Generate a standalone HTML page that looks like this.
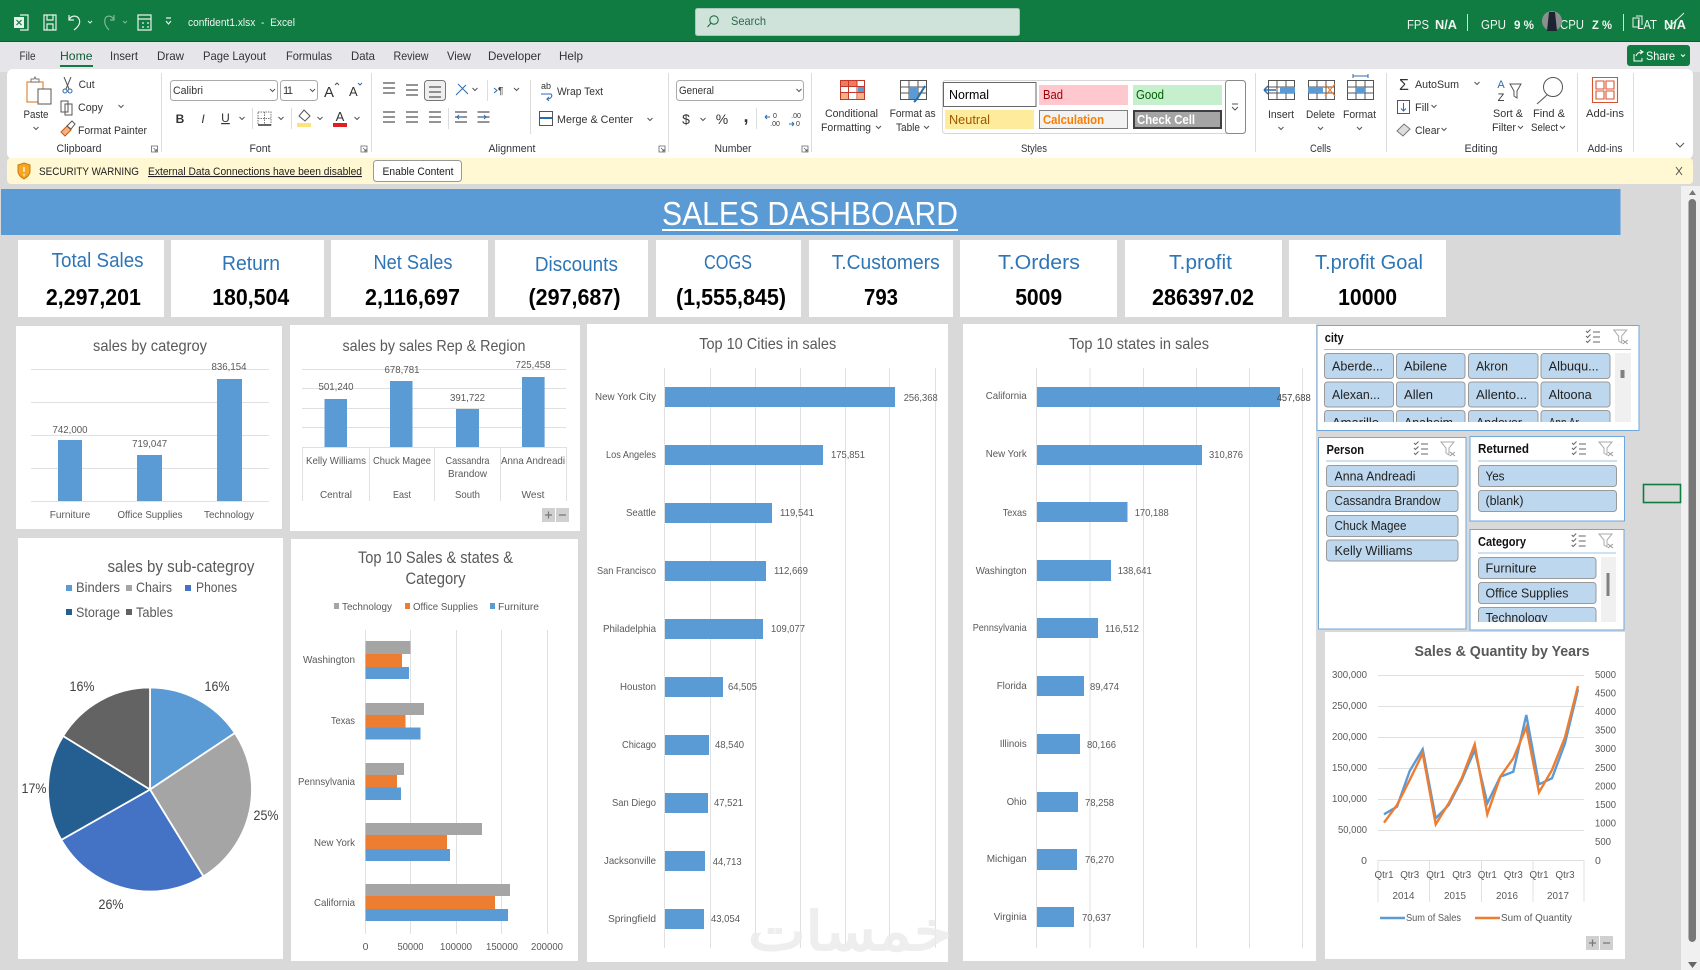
<!DOCTYPE html>
<html lang="en"><head><meta charset="utf-8"><title>confident1.xlsx - Excel</title>
<style>
html,body{margin:0;padding:0;background:#d9d9d9;width:1700px;height:970px;overflow:hidden}
svg{display:block;filter:blur(.35px)}
text{font-family:"Liberation Sans",sans-serif;fill:#595959;font-size:10.5px;white-space:pre}
.r text{fill:#333;font-size:11px}
.w text{fill:#eef5f0;font-size:11px}
.k{fill:#2e75b6!important;font-size:20px!important}
.v{fill:#000!important;font-size:23px!important;font-weight:bold}
.h{font-size:16px!important}
.b{fill:#5b9bd5}
.g{stroke:#e0e0e0;stroke-width:1;fill:none}
.sb{fill:#bdd7ee;stroke:#9a9a9a;stroke-width:1}
.sl{fill:#fff;stroke:#6fa8dc;stroke-width:1}
.st{fill:#222!important;font-size:12.5px!important}
.sh{fill:#111!important;font-size:12.5px!important;font-weight:bold}
.pm{fill:#d0d0d0}
</style></head><body>
<svg width="1700" height="970" viewBox="0 0 1700 970" xmlns="http://www.w3.org/2000/svg">
<defs>
<path id="ch" d="M0 0l2.5 2.5 2.5-2.5" fill="none" stroke="#555" stroke-width="1"/>
<g id="ms" fill="none" stroke="#666" stroke-width="1"><path d="M-7-6l1.5 1.5 3-3M-7-1l1.5 1.5 3-3M-7 4l1.5 1.5 3-3"/><path d="M0-5h7M0 0h7M0 5h7"/></g>
<g id="fc" fill="none" stroke="#aaa" stroke-width="1"><path d="M-7-7h13l-5 6v7l-3-2v-5z"/><path d="M2 3l5 4M7 3l-5 4" stroke="#999"/></g>
<g id="dl" fill="none" stroke="#666" stroke-width=".8"><path d="M-3-3h6v6h-6z"/><path d="M-1-1l3 3M2 0v2h-2"/></g>
<g id="al" stroke="#555" stroke-width="1.2"><path d="M-6-5h12M-6 0h12M-6 5h12"/></g>
<g id="grid" fill="none" stroke="#555" stroke-width="1"><path d="M.5.5h26v19h-26zM.5 7h26M.5 13h26M9 .5v19M18 .5v19"/></g>
<clipPath id="c1"><rect x="1320" y="352" width="295" height="70"/></clipPath>
<clipPath id="c2"><rect x="1474" y="555" width="125" height="67"/></clipPath>
</defs>

<rect width="1700" height="970" fill="#d9d9d9"/>

<!-- title bar -->
<rect width="1700" height="42" fill="#107c41"/>
<rect y="41" width="1700" height="1" fill="#0c5f32"/>
<g fill="none" stroke="#e8f2ec" stroke-width="1.2">
<path d="M20 15h8v15h-8"/>
<path d="M44 15h12v15h-12zM47 15v5h6v-5M47 30v-6h6v6"/>
<path d="M69 20c2-5 8-5 10-1 2 4-1 8-5 11M69 15v5h5"/>
<path d="M88 21l2 2 2-2" stroke-width="1"/>
<path d="M114 20c-2-5-8-5-9-1-1 4 1 8 4 11M114 15v5h-4" stroke="#7fb89a"/>
<path d="M123 21l2 2 2-2" stroke="#7fb89a" stroke-width="1"/>
<path d="M138 15h13v15h-13zM138 19h13M142 23h2M147 23h2M142 27h2M147 27h2"/>
<path d="M166 18h5M166 21l2.5 3 2.5-3"/>
</g>
<rect x="14" y="17" width="10" height="11" fill="#e8f2ec"/><path d="M16.500 20l5 5M21.500 20l-5 5" stroke="#107c41" stroke-width="1.200"/>
<g class="w">
<text x="188" y="26" textLength="107" lengthAdjust="spacingAndGlyphs">confident1.xlsx  -  Excel</text>
<text x="1407" y="29" style="font-size:13px" textLength="22" lengthAdjust="spacingAndGlyphs">FPS</text>
<text x="1435" y="29" style="font-size:13px;font-weight:bold" textLength="22" lengthAdjust="spacingAndGlyphs">N/A</text>
<text x="1481" y="29" style="font-size:13px" textLength="25" lengthAdjust="spacingAndGlyphs">GPU</text>
<text x="1514" y="29" style="font-size:12px;font-weight:bold" textLength="20" lengthAdjust="spacingAndGlyphs">9 %</text>
<text x="1560" y="29" style="font-size:13px" textLength="24" lengthAdjust="spacingAndGlyphs">CPU</text>
<text x="1592" y="29" style="font-size:12px;font-weight:bold" textLength="20" lengthAdjust="spacingAndGlyphs">Z %</text>
<text x="1637" y="29" style="font-size:13px" textLength="20" lengthAdjust="spacingAndGlyphs">LAT</text>
<text x="1664" y="29" style="font-size:13px;font-weight:bold" textLength="22" lengthAdjust="spacingAndGlyphs">N/A</text>
</g>
<rect x="1467" y="14" width="1" height="17" fill="#cfe3d8"/><rect x="1623" y="14" width="1" height="17" fill="#cfe3d8"/>
<circle cx="1552" cy="21" r="10" fill="#8b8f8f"/><path d="M1549 12h6l2 19h-10z" fill="#1d2430"/>
<path d="M1633 18h6v9h-6zM1636 16h6v9" fill="none" stroke="#e8f2ec"/>
<path d="M1666 30l18-17" stroke="#e8f2ec"/>
<rect x="695.500" y="8.500" width="324" height="27" rx="2" fill="#d0e3da" stroke="#a9c7b6"/>
<circle cx="714" cy="20" r="4.200" fill="none" stroke="#1f6d43" stroke-width="1.100"/><path d="M711 23l-3.500 4" stroke="#1f6d43" stroke-width="1.100"/>
<text x="731" y="25" style="fill:#2a6a48;font-size:12px" textLength="35" lengthAdjust="spacingAndGlyphs">Search</text>

<!-- tabs -->
<rect y="42" width="1700" height="30" fill="#e6e6ea"/>
<g class="r">
<text x="19.500" y="60" style="font-size:12px" textLength="16" lengthAdjust="spacingAndGlyphs">File</text>
<text x="60" y="60" style="font-size:12px;fill:#0e5c32" textLength="32.500" lengthAdjust="spacingAndGlyphs">Home</text>
<text x="110" y="60" style="font-size:12px" textLength="28" lengthAdjust="spacingAndGlyphs">Insert</text>
<text x="157" y="60" style="font-size:12px" textLength="27" lengthAdjust="spacingAndGlyphs">Draw</text>
<text x="203" y="60" style="font-size:12px" textLength="63" lengthAdjust="spacingAndGlyphs">Page Layout</text>
<text x="286" y="60" style="font-size:12px" textLength="46" lengthAdjust="spacingAndGlyphs">Formulas</text>
<text x="351" y="60" style="font-size:12px" textLength="24" lengthAdjust="spacingAndGlyphs">Data</text>
<text x="393.500" y="60" style="font-size:12px" textLength="35" lengthAdjust="spacingAndGlyphs">Review</text>
<text x="447" y="60" style="font-size:12px" textLength="24" lengthAdjust="spacingAndGlyphs">View</text>
<text x="488" y="60" style="font-size:12px" textLength="53" lengthAdjust="spacingAndGlyphs">Developer</text>
<text x="559" y="60" style="font-size:12px" textLength="24" lengthAdjust="spacingAndGlyphs">Help</text>
</g>
<rect x="60" y="65" width="33" height="2" fill="#107c41"/>
<rect x="1627" y="45" width="63" height="21" rx="3" fill="#107c41"/>
<path d="M1634 54v7h8v-3M1636 56c1-3 3-4 6-4M1640 50l3 2-3 2" fill="none" stroke="#fff"/>
<text x="1646" y="60" style="fill:#fff;font-size:12px" textLength="29" lengthAdjust="spacingAndGlyphs">Share</text>
<path d="M1681 54.500l2 2 2-2" fill="none" stroke="#fff"/>

<!-- ribbon -->
<rect x="7" y="69" width="1686" height="90" rx="6" fill="#fff"/>
<g fill="#dcdcdc">
<rect x="161" y="73" width="1" height="79"/><rect x="371" y="73" width="1" height="79"/><rect x="668" y="73" width="1" height="79"/><rect x="811" y="73" width="1" height="79"/><rect x="1255" y="73" width="1" height="79"/><rect x="1386" y="73" width="1" height="79"/><rect x="1577" y="73" width="1" height="79"/><rect x="1633" y="73" width="1" height="79"/>
<rect x="252" y="108" width="1" height="21"/><rect x="291" y="108" width="1" height="21"/><rect x="448" y="108" width="1" height="21"/><rect x="487" y="80" width="1" height="21"/><rect x="530" y="80" width="1" height="54"/><rect x="756" y="108" width="1" height="21"/>
</g>
<g class="r">
<!-- clipboard -->
<path d="M27 82h16v20h-16z" fill="#fff" stroke="#e08b3c" stroke-width="1.200"/><path d="M31 82v-3h3l1-2 1 2h3v3z" fill="#fff" stroke="#777"/>
<rect x="38" y="89" width="13" height="15" fill="#fff" stroke="#555"/>
<text x="36" y="118" text-anchor="middle" textLength="25" lengthAdjust="spacingAndGlyphs">Paste</text>
<use href="#ch" x="33.500" y="127"/>
<path d="M64 77l5 12M71 77l-5 12" stroke="#555" fill="none"/><circle cx="65" cy="91" r="2" fill="none" stroke="#2b6cb0"/><circle cx="70" cy="91" r="2" fill="none" stroke="#2b6cb0"/>
<text x="78.600" y="88" textLength="16" lengthAdjust="spacingAndGlyphs">Cut</text>
<path d="M61 101h7v11h-7zM65 104h7v11h-7z" fill="#fff" stroke="#555"/>
<text x="78" y="111" textLength="25" lengthAdjust="spacingAndGlyphs">Copy</text><use href="#ch" x="118.500" y="105"/>
<path d="M61 132l6-6 4 4-6 6z" fill="#f4b183" stroke="#c55a11"/><path d="M67 126l5-5 3 3-4 5z" fill="#fff" stroke="#555"/>
<text x="78" y="134" textLength="69" lengthAdjust="spacingAndGlyphs">Format Painter</text>
<text x="79" y="152" text-anchor="middle" textLength="45" lengthAdjust="spacingAndGlyphs">Clipboard</text>
<use href="#dl" x="154.500" y="149"/>
<!-- font -->
<rect x="170.500" y="80.500" width="107" height="20" rx="3" fill="#fff" stroke="#aaa"/><text x="173" y="94" textLength="30" lengthAdjust="spacingAndGlyphs">Calibri</text><use href="#ch" x="270" y="89"/>
<rect x="280.500" y="80.500" width="37" height="20" rx="3" fill="#fff" stroke="#aaa"/><text x="283" y="94" textLength="10">11</text><use href="#ch" x="310" y="89"/>
<text x="324" y="97" style="font-size:15px" textLength="10">A</text><path d="M335 85l2-2 2 2" fill="none" stroke="#555"/>
<text x="349" y="96" style="font-size:13px" textLength="9">A</text><path d="M358 83l2 2 2-2" fill="none" stroke="#2b6cb0"/>
<text x="180" y="123" text-anchor="middle" style="font-weight:bold;font-size:12px">B</text>
<text x="203" y="123" text-anchor="middle" style="font-style:italic;font-size:12px">I</text>
<text x="225.500" y="122" text-anchor="middle" style="font-size:12px;text-decoration:underline">U</text><use href="#ch" x="239.500" y="117"/>
<path d="M258 112h13v13h-13zM264.500 112v13M258 118.500h13" fill="none" stroke="#777" stroke-dasharray="1.500 1"/><path d="M258 125h13" stroke="#333" stroke-width="1.500"/><use href="#ch" x="278.500" y="117"/>
<path d="M304 110l6 6-5 5-6-5z" fill="#fff" stroke="#555"/><rect x="297" y="123" width="14" height="4" fill="#ffe27a"/><use href="#ch" x="317.500" y="117"/>
<text x="340" y="121" text-anchor="middle" style="font-size:13px">A</text><rect x="333" y="123" width="14" height="4" fill="#e02020"/><use href="#ch" x="354.500" y="117"/>
<text x="260" y="152" text-anchor="middle" textLength="21" lengthAdjust="spacingAndGlyphs">Font</text><use href="#dl" x="364" y="149"/>
<!-- alignment -->
<use href="#al" x="389" y="88"/><use href="#al" x="412" y="90"/>
<rect x="424.500" y="80.500" width="21" height="20" rx="3" fill="#eee" stroke="#777"/><use href="#al" x="435" y="92"/>
<path d="M456 95l10-10M458 84l10 10" stroke="#2b6cb0" fill="none"/><use href="#ch" x="472.500" y="88"/>
<path d="M494 88l3 2.500-3 2.500" stroke="#2b6cb0" fill="none"/><text x="498" y="94" style="font-size:10px">¶</text><use href="#ch" x="514" y="88"/>
<text x="541" y="89" style="font-size:9px">ab</text><path d="M541 94h10c2 2 0 5-4 5l2-2m-2 2l2 2" fill="none" stroke="#2b6cb0"/>
<text x="557" y="95" textLength="46" lengthAdjust="spacingAndGlyphs">Wrap Text</text>
<use href="#al" x="389" y="117"/><use href="#al" x="412" y="117"/><use href="#al" x="435" y="117"/><use href="#al" x="461" y="117"/><use href="#al" x="483.500" y="117"/>
<path d="M457 117h6m-6 0l2-2m-2 2l2 2M480 117h6m0 0l-2-2m2 2l-2 2" stroke="#2b6cb0" fill="none"/>
<rect x="539.500" y="111.500" width="13" height="14" fill="#fff" stroke="#555"/><path d="M540 118h12M542 118h8" stroke="#2b6cb0" stroke-width="2"/>
<text x="557" y="123" textLength="76" lengthAdjust="spacingAndGlyphs">Merge &amp; Center</text><use href="#ch" x="647.500" y="118"/>
<text x="512" y="152" text-anchor="middle" textLength="47" lengthAdjust="spacingAndGlyphs">Alignment</text><use href="#dl" x="662" y="149"/>
<!-- number -->
<rect x="676.500" y="80.500" width="127" height="20" rx="3" fill="#fff" stroke="#aaa"/><text x="679" y="94" textLength="35" lengthAdjust="spacingAndGlyphs">General</text><use href="#ch" x="796.500" y="89"/>
<text x="686" y="124" text-anchor="middle" style="font-size:14px">$</text><use href="#ch" x="700.500" y="118"/>
<text x="722" y="124" text-anchor="middle" style="font-size:14px">%</text>
<text x="746" y="122" text-anchor="middle" style="font-size:18px;font-weight:bold">,</text>
<text x="775" y="118" text-anchor="middle" style="font-size:7px">0</text><text x="775" y="126" text-anchor="middle" style="font-size:7px">.00</text><path d="M765 117h5m-5 0l2-2m-2 2l2 2" stroke="#2b6cb0" fill="none"/>
<text x="796" y="118" text-anchor="middle" style="font-size:7px">.00</text><text x="798" y="126" text-anchor="middle" style="font-size:7px">0</text><path d="M789 124h5m0 0l-2-2m2 2l-2 2" stroke="#2b6cb0" fill="none"/>
<text x="733" y="152" text-anchor="middle" textLength="37" lengthAdjust="spacingAndGlyphs">Number</text><use href="#dl" x="805" y="149"/>
<!-- styles -->
<rect x="840" y="80" width="25" height="19" fill="#fff"/><rect x="840" y="80" width="8" height="6" fill="#ef7b5c"/><rect x="849" y="80" width="8" height="6" fill="#ef7b5c"/><rect x="858" y="86" width="7" height="6" fill="#5b9bd5"/><rect x="840" y="93" width="8" height="6" fill="#f4b183"/><rect x="858" y="93" width="7" height="6" fill="#f4b183"/>
<path d="M840.500 80.500h24v19h-24zM840 86.500h25M840 92.500h25M848.500 80v19M857 80v19" fill="none" stroke="#c0392b"/>
<text x="851.500" y="117" text-anchor="middle" textLength="53" lengthAdjust="spacingAndGlyphs">Conditional</text>
<text x="821" y="131" textLength="50" lengthAdjust="spacingAndGlyphs">Formatting</text><use href="#ch" x="876" y="126"/>
<use href="#grid" x="900" y="80"/><rect x="909" y="87" width="9" height="12" fill="#5b9bd5"/><path d="M925 86l-8 13-3 3" stroke="#2b6cb0" stroke-width="2" fill="none"/>
<text x="889.600" y="117" textLength="46" lengthAdjust="spacingAndGlyphs">Format as</text>
<text x="896" y="131" textLength="24" lengthAdjust="spacingAndGlyphs">Table</text><use href="#ch" x="924" y="126"/>
<rect x="942.500" y="80.500" width="303" height="53" rx="3" fill="#fff" stroke="#d6d6d6"/>
<rect x="943.500" y="82.500" width="92.500" height="24" fill="#fff" stroke="#666"/><text x="949" y="99" style="fill:#000;font-size:12.500px" textLength="40" lengthAdjust="spacingAndGlyphs">Normal</text>
<rect x="1039" y="85" width="89" height="20" fill="#ffc7ce"/><text x="1043" y="99" style="fill:#9c0006;font-size:12.500px" textLength="20" lengthAdjust="spacingAndGlyphs">Bad</text>
<rect x="1133" y="85" width="89" height="20" fill="#c6efce"/><text x="1136" y="99" style="fill:#006100;font-size:12.500px" textLength="28" lengthAdjust="spacingAndGlyphs">Good</text>
<rect x="945" y="110" width="89" height="19" fill="#ffeb9c"/><text x="949" y="124" style="fill:#9c5700;font-size:12.500px" textLength="41" lengthAdjust="spacingAndGlyphs">Neutral</text>
<rect x="1039.500" y="110.500" width="88" height="18" fill="#f2f2f2" stroke="#7f7f7f"/><text x="1043" y="124" style="fill:#fa7d00;font-size:12.500px;font-weight:bold" textLength="61" lengthAdjust="spacingAndGlyphs">Calculation</text>
<rect x="1134" y="111" width="87" height="17" fill="#a5a5a5" stroke="#3f3f3f" stroke-width="2"/><text x="1137" y="124" style="fill:#fff;font-size:12.500px;font-weight:bold" textLength="58" lengthAdjust="spacingAndGlyphs">Check Cell</text>
<rect x="1225.500" y="80.500" width="20" height="53" rx="3" fill="#fff" stroke="#888"/><path d="M1232 104h6M1232 107l3 3 3-3" fill="none" stroke="#555"/>
<text x="1034" y="152" text-anchor="middle" textLength="26" lengthAdjust="spacingAndGlyphs">Styles</text>
<!-- cells -->
<use href="#grid" x="1268" y="80"/><rect x="1280" y="87" width="15" height="6" fill="#5b9bd5"/><path d="M1264 90h12m-12 0l4-4m-4 4l4 4" stroke="#2b6cb0" stroke-width="1.500" fill="none"/>
<text x="1281" y="118" text-anchor="middle" textLength="26" lengthAdjust="spacingAndGlyphs">Insert</text><use href="#ch" x="1278.500" y="127"/>
<use href="#grid" x="1308" y="80"/><rect x="1308" y="87" width="15" height="6" fill="#5b9bd5"/><path d="M1325 84l10 12M1335 84l-10 12" stroke="#ed7d31" stroke-width="1.200" fill="none"/>
<text x="1320.500" y="118" text-anchor="middle" textLength="29" lengthAdjust="spacingAndGlyphs">Delete</text><use href="#ch" x="1318" y="127"/>
<path d="M1353 76h15M1353 74v4M1368 74v4" stroke="#2b6cb0" fill="none"/>
<use href="#grid" x="1347" y="80"/><rect x="1356" y="87" width="9" height="6" fill="#5b9bd5"/>
<text x="1359.500" y="118" text-anchor="middle" textLength="33" lengthAdjust="spacingAndGlyphs">Format</text><use href="#ch" x="1357" y="127"/>
<text x="1320.500" y="152" text-anchor="middle" textLength="21" lengthAdjust="spacingAndGlyphs">Cells</text>
<!-- editing -->
<text x="1404" y="90" text-anchor="middle" style="font-size:16px">Σ</text><text x="1415" y="88" textLength="44" lengthAdjust="spacingAndGlyphs">AutoSum</text><use href="#ch" x="1474.500" y="82"/>
<rect x="1397.500" y="100.500" width="12" height="13" fill="#fff" stroke="#555"/><path d="M1403.500 103v8m-2.500-2.500l2.500 2.500 2.500-2.500" stroke="#2b6cb0" fill="none"/>
<text x="1415" y="111" textLength="14" lengthAdjust="spacingAndGlyphs">Fill</text><use href="#ch" x="1431.500" y="105"/>
<path d="M1397 131l7-7 6 5-7 7z" fill="#ddd" stroke="#777"/>
<text x="1415" y="134" textLength="25" lengthAdjust="spacingAndGlyphs">Clear</text><use href="#ch" x="1441.500" y="128"/>
<text x="1501" y="88" text-anchor="middle" style="font-size:11px;fill:#2b6cb0">A</text><text x="1501" y="101" text-anchor="middle" style="font-size:11px">Z</text><path d="M1510 84h11l-4 7v7l-3-2v-5z" fill="none" stroke="#555"/>
<circle cx="1553" cy="87" r="9.500" fill="none" stroke="#555"/><path d="M1547 95l-10 9" stroke="#555"/>
<text x="1508" y="117" text-anchor="middle" textLength="30" lengthAdjust="spacingAndGlyphs">Sort &amp;</text>
<text x="1492" y="131" textLength="24" lengthAdjust="spacingAndGlyphs">Filter</text><use href="#ch" x="1518" y="126"/>
<text x="1549" y="117" text-anchor="middle" textLength="32" lengthAdjust="spacingAndGlyphs">Find &amp;</text>
<text x="1531" y="131" textLength="27" lengthAdjust="spacingAndGlyphs">Select</text><use href="#ch" x="1560" y="126"/>
<text x="1481" y="152" text-anchor="middle" textLength="33" lengthAdjust="spacingAndGlyphs">Editing</text>
<!-- add-ins -->
<path d="M1592.500 77.500h25v25h-25zM1596 81h8v8h-8zM1606 81h8v8h-8zM1596 91h8v8h-8zM1606 91h8v8h-8z" fill="#fff" stroke="#d9532c" stroke-width="1.100"/>
<text x="1605" y="117" text-anchor="middle" textLength="38" lengthAdjust="spacingAndGlyphs">Add-ins</text>
<text x="1605" y="152" text-anchor="middle" textLength="35" lengthAdjust="spacingAndGlyphs">Add-ins</text>
<path d="M1676 143l4 4 4-4" fill="none" stroke="#555"/>
</g>

<!-- security -->
<rect x="7" y="158" width="1686" height="26" rx="4" fill="#fff8d2"/>
<path d="M24 163l6 2v6c0 4-3 6-6 8-3-2-6-4-6-8v-6z" fill="#f5a623" stroke="#c97a10"/><path d="M24 167v5M24 174v1.500" stroke="#fff" stroke-width="1.300"/>
<text x="39" y="175" style="fill:#222;font-size:11px" textLength="100" lengthAdjust="spacingAndGlyphs">SECURITY WARNING</text>
<text x="148" y="175" style="fill:#222;font-size:11px;text-decoration:underline" textLength="214" lengthAdjust="spacingAndGlyphs">External Data Connections have been disabled</text>
<rect x="373.500" y="160.500" width="88" height="21" rx="3" fill="#fff" stroke="#999"/>
<text x="418" y="175" text-anchor="middle" style="fill:#222;font-size:11px" textLength="71" lengthAdjust="spacingAndGlyphs">Enable Content</text>
<path d="M1676 167l6 8M1682 167l-6 8" stroke="#555" fill="none"/>

<!-- scrollbar -->
<rect x="1681" y="186" width="19" height="784" fill="#f0f0f0"/>
<rect x="1688.500" y="199" width="7.500" height="743" rx="3.700" fill="#777"/>
<path d="M1689 195l3.500-5 3.500 5z" fill="#777"/><path d="M1688 962l4.500 6 4.500-6z" fill="#666"/>
<rect x="1643.500" y="484.500" width="37" height="18" fill="none" stroke="#107c41" stroke-width="1.600"/>

<!-- banner -->
<rect x="1" y="189" width="1619.500" height="46" fill="#5b9bd5"/>
<text x="810" y="225" text-anchor="middle" style="fill:#fff;font-size:33px" textLength="296" lengthAdjust="spacingAndGlyphs">SALES DASHBOARD</text>
<rect x="662" y="229" width="296" height="2" fill="#fff"/>

<!-- KPI -->
<g fill="#fff">
<rect x="18" y="240" width="146" height="77"/><rect x="171" y="240" width="153" height="77"/><rect x="331" y="240" width="157" height="77"/><rect x="495" y="240" width="153" height="77"/><rect x="656" y="240" width="145" height="77"/><rect x="809" y="240" width="144" height="77"/><rect x="960" y="240" width="157" height="77"/><rect x="1125" y="240" width="157" height="77"/><rect x="1289" y="240" width="157" height="77"/>
</g>
<text class="k" x="97.600" y="267" text-anchor="middle" textLength="92" lengthAdjust="spacingAndGlyphs">Total Sales</text>
<text class="v" x="93.400" y="305" text-anchor="middle" textLength="95" lengthAdjust="spacingAndGlyphs">2,297,201</text>
<text class="k" x="251" y="270" text-anchor="middle" textLength="58" lengthAdjust="spacingAndGlyphs">Return</text>
<text class="v" x="250.700" y="305" text-anchor="middle" textLength="77" lengthAdjust="spacingAndGlyphs">180,504</text>
<text class="k" x="413" y="269" text-anchor="middle" textLength="79" lengthAdjust="spacingAndGlyphs">Net Sales</text>
<text class="v" x="412.500" y="305" text-anchor="middle" textLength="95" lengthAdjust="spacingAndGlyphs">2,116,697</text>
<text class="k" x="576.400" y="271" text-anchor="middle" textLength="83" lengthAdjust="spacingAndGlyphs">Discounts</text>
<text class="v" x="574.500" y="305" text-anchor="middle" textLength="92" lengthAdjust="spacingAndGlyphs">(297,687)</text>
<text class="k" x="728" y="269" text-anchor="middle" textLength="48" lengthAdjust="spacingAndGlyphs">COGS</text>
<text class="v" x="731" y="305" text-anchor="middle" textLength="110" lengthAdjust="spacingAndGlyphs">(1,555,845)</text>
<text class="k" x="885.700" y="269" text-anchor="middle" textLength="108" lengthAdjust="spacingAndGlyphs">T.Customers</text>
<text class="v" x="881" y="305" text-anchor="middle" textLength="34" lengthAdjust="spacingAndGlyphs">793</text>
<text class="k" x="1039" y="269" text-anchor="middle" textLength="82" lengthAdjust="spacingAndGlyphs">T.Orders</text>
<text class="v" x="1038.700" y="305" text-anchor="middle" textLength="47" lengthAdjust="spacingAndGlyphs">5009</text>
<text class="k" x="1200.500" y="269" text-anchor="middle" textLength="63" lengthAdjust="spacingAndGlyphs">T.profit</text>
<text class="v" x="1203" y="305" text-anchor="middle" textLength="102" lengthAdjust="spacingAndGlyphs">286397.02</text>
<text class="k" x="1369" y="269" text-anchor="middle" textLength="108" lengthAdjust="spacingAndGlyphs">T.profit Goal</text>
<text class="v" x="1367.600" y="305" text-anchor="middle" textLength="59" lengthAdjust="spacingAndGlyphs">10000</text>

<!-- chart cards -->
<g fill="#fff">
<rect x="16" y="326" width="266" height="203"/><rect x="290" y="325" width="290" height="206"/><rect x="587" y="324" width="361" height="638"/><rect x="963" y="324" width="353" height="637"/><rect x="18" y="538" width="265" height="421"/><rect x="291" y="539" width="287" height="422"/><rect x="1325" y="632" width="300" height="327"/>
</g>

<!-- sales by category -->
<text class="h" x="150" y="351" text-anchor="middle" textLength="114" lengthAdjust="spacingAndGlyphs">sales by categroy</text>
<path class="g" d="M31 369.500h238M31 402.500h238M31 435.500h238M31 468.500h238M31 501.500h238"/>
<rect class="b" x="58" y="440" width="24" height="61"/><rect class="b" x="137" y="455" width="25" height="46"/><rect class="b" x="217" y="379" width="25" height="122"/>
<text x="70" y="433" text-anchor="middle" textLength="35" lengthAdjust="spacingAndGlyphs">742,000</text>
<text x="149.600" y="447" text-anchor="middle" textLength="35" lengthAdjust="spacingAndGlyphs">719,047</text>
<text x="229" y="370" text-anchor="middle" textLength="35" lengthAdjust="spacingAndGlyphs">836,154</text>
<text x="70" y="518" text-anchor="middle" textLength="40.500" lengthAdjust="spacingAndGlyphs">Furniture</text>
<text x="150" y="518" text-anchor="middle" textLength="65" lengthAdjust="spacingAndGlyphs">Office Supplies</text>
<text x="229" y="518" text-anchor="middle" textLength="50" lengthAdjust="spacingAndGlyphs">Technology</text>

<!-- rep & region -->
<text class="h" x="434" y="351" text-anchor="middle" textLength="183" lengthAdjust="spacingAndGlyphs">sales by sales Rep &amp; Region</text>
<path class="g" d="M302 369.500h264M302 388.500h264M302 408.500h264M302 427.500h264M302 447.500h264M302.500 447v54M369.500 447v54M434.500 447v54M500.500 447v54M566.500 447v54"/>
<rect class="b" x="324.500" y="399" width="22.500" height="48"/><rect class="b" x="390" y="381" width="22.500" height="66"/><rect class="b" x="456" y="409" width="23" height="38"/><rect class="b" x="522" y="377" width="22.600" height="70"/>
<text x="336" y="390" text-anchor="middle" textLength="35" lengthAdjust="spacingAndGlyphs">501,240</text>
<text x="402" y="373" text-anchor="middle" textLength="35" lengthAdjust="spacingAndGlyphs">678,781</text>
<text x="467.500" y="401" text-anchor="middle" textLength="35" lengthAdjust="spacingAndGlyphs">391,722</text>
<text x="533" y="368" text-anchor="middle" textLength="35" lengthAdjust="spacingAndGlyphs">725,458</text>
<text x="336" y="464" text-anchor="middle" textLength="60" lengthAdjust="spacingAndGlyphs">Kelly Williams</text>
<text x="402" y="464" text-anchor="middle" textLength="58" lengthAdjust="spacingAndGlyphs">Chuck Magee</text>
<text x="467.500" y="464" text-anchor="middle" textLength="44" lengthAdjust="spacingAndGlyphs">Cassandra</text>
<text x="467.500" y="477" text-anchor="middle" textLength="39" lengthAdjust="spacingAndGlyphs">Brandow</text>
<text x="533" y="464" text-anchor="middle" textLength="64" lengthAdjust="spacingAndGlyphs">Anna Andreadi</text>
<text x="336" y="498" text-anchor="middle" textLength="32" lengthAdjust="spacingAndGlyphs">Central</text>
<text x="402" y="498" text-anchor="middle" textLength="18" lengthAdjust="spacingAndGlyphs">East</text>
<text x="467.500" y="498" text-anchor="middle" textLength="25" lengthAdjust="spacingAndGlyphs">South</text>
<text x="533" y="498" text-anchor="middle" textLength="23" lengthAdjust="spacingAndGlyphs">West</text>
<rect class="pm" x="542" y="508" width="13" height="14"/><rect class="pm" x="556" y="508" width="13" height="14"/>
<path d="M545 515h7M548.500 511.500v7M559 515h7" stroke="#777" stroke-width="1.200" fill="none"/>

<!-- pie -->
<text x="181" y="572" text-anchor="middle" style="font-size:17px" textLength="147" lengthAdjust="spacingAndGlyphs">sales by sub-categroy</text>
<rect x="66" y="585" width="6" height="6" fill="#5b9bd5"/><text x="76" y="592" style="font-size:14px" textLength="44" lengthAdjust="spacingAndGlyphs">Binders</text>
<rect x="126" y="585" width="6" height="6" fill="#a5a5a5"/><text x="136" y="592" style="font-size:14px" textLength="36" lengthAdjust="spacingAndGlyphs">Chairs</text>
<rect x="185" y="585" width="6" height="6" fill="#4472c4"/><text x="196" y="592" style="font-size:14px" textLength="41" lengthAdjust="spacingAndGlyphs">Phones</text>
<rect x="66" y="609" width="6" height="6" fill="#255e91"/><text x="76" y="617" style="font-size:14px" textLength="44" lengthAdjust="spacingAndGlyphs">Storage</text>
<rect x="126" y="609" width="6" height="6" fill="#636363"/><text x="136" y="617" style="font-size:14px" textLength="37" lengthAdjust="spacingAndGlyphs">Tables</text>
<g stroke="#fff" stroke-width="1.800">
<path d="M150 789.500L150 687.500A102 102 0 0 1 234.900 733Z" fill="#5b9bd5"/>
<path d="M150 789.500L234.900 733A102 102 0 0 1 203.400 876.400Z" fill="#a5a5a5"/>
<path d="M150 789.500L203.400 876.400A102 102 0 0 1 61.300 839.900Z" fill="#4472c4"/>
<path d="M150 789.500L61.300 839.900A102 102 0 0 1 63.100 736Z" fill="#255e91"/>
<path d="M150 789.500L63.100 736A102 102 0 0 1 150 687.500Z" fill="#636363"/>
</g>
<text x="217" y="691" text-anchor="middle" style="font-size:14px;fill:#404040" textLength="25" lengthAdjust="spacingAndGlyphs">16%</text>
<text x="266" y="820" text-anchor="middle" style="font-size:14px;fill:#404040" textLength="25" lengthAdjust="spacingAndGlyphs">25%</text>
<text x="111" y="909" text-anchor="middle" style="font-size:14px;fill:#404040" textLength="25" lengthAdjust="spacingAndGlyphs">26%</text>
<text x="34" y="793" text-anchor="middle" style="font-size:14px;fill:#404040" textLength="25" lengthAdjust="spacingAndGlyphs">17%</text>
<text x="82" y="691" text-anchor="middle" style="font-size:14px;fill:#404040" textLength="25" lengthAdjust="spacingAndGlyphs">16%</text>

<!-- Top 10 sales & states -->
<text x="435.500" y="563" text-anchor="middle" style="font-size:17px" textLength="155" lengthAdjust="spacingAndGlyphs">Top 10 Sales &amp; states &amp;</text>
<text x="435.500" y="584" text-anchor="middle" style="font-size:17px" textLength="60" lengthAdjust="spacingAndGlyphs">Category</text>
<rect x="334" y="603" width="5" height="6" fill="#a5a5a5"/><text x="342" y="610" textLength="50" lengthAdjust="spacingAndGlyphs">Technology</text>
<rect x="405" y="603" width="5" height="6" fill="#ed7d31"/><text x="413" y="610" textLength="65" lengthAdjust="spacingAndGlyphs">Office Supplies</text>
<rect x="490" y="603" width="5" height="6" fill="#5b9bd5"/><text x="498" y="610" textLength="41" lengthAdjust="spacingAndGlyphs">Furniture</text>
<path class="g" d="M365.500 630v304M410.500 630v304M456.500 630v304M501.500 630v304M547.500 630v304"/>
<g fill="#a5a5a5"><rect x="365.500" y="641" width="45" height="13"/><rect x="365.500" y="703" width="58.500" height="12"/><rect x="365.500" y="763" width="38.500" height="12"/><rect x="365.500" y="823" width="116.500" height="12"/><rect x="365.500" y="884" width="144.500" height="12"/></g>
<g fill="#ed7d31"><rect x="365.500" y="654" width="36.500" height="13"/><rect x="365.500" y="715" width="40" height="12.500"/><rect x="365.500" y="775" width="31.500" height="12.500"/><rect x="365.500" y="835" width="81.500" height="14"/><rect x="365.500" y="896" width="129.500" height="13"/></g>
<g fill="#5b9bd5"><rect x="365.500" y="667" width="43.500" height="12"/><rect x="365.500" y="727.500" width="55" height="12"/><rect x="365.500" y="787.500" width="35.500" height="12.500"/><rect x="365.500" y="849" width="84.500" height="12"/><rect x="365.500" y="909" width="142.500" height="12"/></g>
<text x="355" y="663" text-anchor="end" textLength="52" lengthAdjust="spacingAndGlyphs">Washington</text>
<text x="355" y="724" text-anchor="end" textLength="24" lengthAdjust="spacingAndGlyphs">Texas</text>
<text x="355" y="785" text-anchor="end" textLength="57" lengthAdjust="spacingAndGlyphs">Pennsylvania</text>
<text x="355" y="846" text-anchor="end" textLength="41" lengthAdjust="spacingAndGlyphs">New York</text>
<text x="355" y="906" text-anchor="end" textLength="41" lengthAdjust="spacingAndGlyphs">California</text>
<text x="365.500" y="950" text-anchor="middle">0</text>
<text x="410.500" y="950" text-anchor="middle" textLength="26" lengthAdjust="spacingAndGlyphs">50000</text>
<text x="456" y="950" text-anchor="middle" textLength="32" lengthAdjust="spacingAndGlyphs">100000</text>
<text x="502" y="950" text-anchor="middle" textLength="32" lengthAdjust="spacingAndGlyphs">150000</text>
<text x="547" y="950" text-anchor="middle" textLength="32" lengthAdjust="spacingAndGlyphs">200000</text>

<!-- Top 10 cities -->
<text class="h" x="767.700" y="349" text-anchor="middle" textLength="137" lengthAdjust="spacingAndGlyphs">Top 10 Cities in sales</text>
<path class="g" d="M664.500 368v580M710.500 368v580M755.500 368v580M800.500 368v580M845.500 368v580M889.500 368v580M935.500 368v580"/>
<g class="b">
<rect x="665" y="387" width="230" height="20"/><rect x="665" y="445" width="158" height="20"/><rect x="665" y="503" width="107" height="20"/><rect x="665" y="561" width="101" height="20"/><rect x="665" y="619" width="98" height="20"/><rect x="665" y="677" width="58" height="20"/><rect x="665" y="735" width="44" height="20"/><rect x="665" y="793" width="43" height="20"/><rect x="665" y="851" width="40" height="20"/><rect x="665" y="909" width="39" height="20"/>
</g>
<text x="656" y="400" text-anchor="end" textLength="61" lengthAdjust="spacingAndGlyphs">New York City</text>
<text x="656" y="458" text-anchor="end" textLength="50" lengthAdjust="spacingAndGlyphs">Los Angeles</text>
<text x="656" y="516" text-anchor="end" textLength="30" lengthAdjust="spacingAndGlyphs">Seattle</text>
<text x="656" y="574" text-anchor="end" textLength="59" lengthAdjust="spacingAndGlyphs">San Francisco</text>
<text x="656" y="632" text-anchor="end" textLength="53" lengthAdjust="spacingAndGlyphs">Philadelphia</text>
<text x="656" y="690" text-anchor="end" textLength="36" lengthAdjust="spacingAndGlyphs">Houston</text>
<text x="656" y="748" text-anchor="end" textLength="34" lengthAdjust="spacingAndGlyphs">Chicago</text>
<text x="656" y="806" text-anchor="end" textLength="44" lengthAdjust="spacingAndGlyphs">San Diego</text>
<text x="656" y="864" text-anchor="end" textLength="52" lengthAdjust="spacingAndGlyphs">Jacksonville</text>
<text x="656" y="922" text-anchor="end" textLength="48" lengthAdjust="spacingAndGlyphs">Springfield</text>
<text x="903.700" y="401" textLength="34" lengthAdjust="spacingAndGlyphs">256,368</text>
<text x="831" y="458" textLength="34" lengthAdjust="spacingAndGlyphs">175,851</text>
<text x="780" y="516" textLength="34" lengthAdjust="spacingAndGlyphs">119,541</text>
<text x="774" y="574" textLength="34" lengthAdjust="spacingAndGlyphs">112,669</text>
<text x="771" y="632" textLength="34" lengthAdjust="spacingAndGlyphs">109,077</text>
<text x="728" y="690" textLength="29" lengthAdjust="spacingAndGlyphs">64,505</text>
<text x="715" y="748" textLength="29" lengthAdjust="spacingAndGlyphs">48,540</text>
<text x="714" y="806" textLength="29" lengthAdjust="spacingAndGlyphs">47,521</text>
<text x="712.700" y="865" textLength="29" lengthAdjust="spacingAndGlyphs">44,713</text>
<text x="711" y="922" textLength="29" lengthAdjust="spacingAndGlyphs">43,054</text>

<!-- Top 10 states -->
<text class="h" x="1139" y="349" text-anchor="middle" textLength="140" lengthAdjust="spacingAndGlyphs">Top 10 states in sales</text>
<path class="g" d="M1036.500 368v580M1090 368v580M1143.500 368v580M1196.500 368v580M1249.500 368v580M1302.500 368v580"/>
<g class="b">
<rect x="1037" y="387" width="243" height="20"/><rect x="1037" y="445" width="165" height="20"/><rect x="1037" y="502" width="90.500" height="20"/><rect x="1037" y="560" width="74" height="21"/><rect x="1037" y="618" width="61" height="20"/><rect x="1037" y="676" width="47" height="20"/><rect x="1037" y="734" width="43" height="20"/><rect x="1037" y="792" width="41" height="20"/><rect x="1037" y="849" width="40" height="21"/><rect x="1037" y="907" width="37" height="20"/>
</g>
<text x="1026.700" y="399" text-anchor="end" textLength="41" lengthAdjust="spacingAndGlyphs">California</text>
<text x="1026.700" y="457" text-anchor="end" textLength="41" lengthAdjust="spacingAndGlyphs">New York</text>
<text x="1026.700" y="516" text-anchor="end" textLength="24" lengthAdjust="spacingAndGlyphs">Texas</text>
<text x="1026.700" y="574" text-anchor="end" textLength="51" lengthAdjust="spacingAndGlyphs">Washington</text>
<text x="1026.700" y="631" text-anchor="end" textLength="54" lengthAdjust="spacingAndGlyphs">Pennsylvania</text>
<text x="1026.700" y="689" text-anchor="end" textLength="30" lengthAdjust="spacingAndGlyphs">Florida</text>
<text x="1026.700" y="747" text-anchor="end" textLength="27" lengthAdjust="spacingAndGlyphs">Illinois</text>
<text x="1026.700" y="805" text-anchor="end" textLength="20" lengthAdjust="spacingAndGlyphs">Ohio</text>
<text x="1026.700" y="862" text-anchor="end" textLength="40" lengthAdjust="spacingAndGlyphs">Michigan</text>
<text x="1026.700" y="920" text-anchor="end" textLength="33" lengthAdjust="spacingAndGlyphs">Virginia</text>
<text x="1276.700" y="401" style="fill:#404040" textLength="34" lengthAdjust="spacingAndGlyphs">457,688</text>
<text x="1209" y="458" textLength="34" lengthAdjust="spacingAndGlyphs">310,876</text>
<text x="1134.700" y="516" textLength="34" lengthAdjust="spacingAndGlyphs">170,188</text>
<text x="1117.700" y="574" textLength="34" lengthAdjust="spacingAndGlyphs">138,641</text>
<text x="1105" y="632" textLength="34" lengthAdjust="spacingAndGlyphs">116,512</text>
<text x="1090" y="690" textLength="29" lengthAdjust="spacingAndGlyphs">89,474</text>
<text x="1087" y="748" textLength="29" lengthAdjust="spacingAndGlyphs">80,166</text>
<text x="1085" y="806" textLength="29" lengthAdjust="spacingAndGlyphs">78,258</text>
<text x="1085" y="863" textLength="29" lengthAdjust="spacingAndGlyphs">76,270</text>
<text x="1082" y="921" textLength="29" lengthAdjust="spacingAndGlyphs">70,637</text>

<!-- watermark -->
<text x="850" y="950" text-anchor="middle" direction="rtl" style="font-family:'DejaVu Sans',sans-serif;font-size:54px;fill:#ececec;stroke:#ececec;stroke-width:2;opacity:.85" textLength="204" lengthAdjust="spacingAndGlyphs">خمسات</text>

<!-- slicers -->
<rect class="sl" x="1317" y="325.500" width="322" height="105"/>
<text class="sh" x="1324.700" y="342" textLength="19" lengthAdjust="spacingAndGlyphs">city</text>
<use href="#ms" x="1593" y="337"/><use href="#fc" x="1620.700" y="337"/>
<rect x="1324" y="349" width="307" height="1" fill="#9dc3e6"/>
<rect x="1615" y="353" width="16" height="69" fill="#f0f0f0"/><rect x="1620.500" y="370" width="4" height="8" fill="#808080"/>
<g clip-path="url(#c1)">
<rect class="sb" x="1324.500" y="353.500" width="69" height="25" rx="3"/><rect class="sb" x="1396.500" y="353.500" width="68.500" height="25" rx="3"/><rect class="sb" x="1468.500" y="353.500" width="69.500" height="25" rx="3"/><rect class="sb" x="1541" y="353.500" width="69" height="25" rx="3"/>
<rect class="sb" x="1324.500" y="382" width="69" height="25" rx="3"/><rect class="sb" x="1396.500" y="382" width="68.500" height="25" rx="3"/><rect class="sb" x="1468.500" y="382" width="69.500" height="25" rx="3"/><rect class="sb" x="1541" y="382" width="69" height="25" rx="3"/>
<rect class="sb" x="1324.500" y="410.500" width="69" height="25" rx="3"/><rect class="sb" x="1396.500" y="410.500" width="68.500" height="25" rx="3"/><rect class="sb" x="1468.500" y="410.500" width="69.500" height="25" rx="3"/><rect class="sb" x="1541" y="410.500" width="69" height="25" rx="3"/>
<text class="st" x="1332" y="370.500" textLength="51" lengthAdjust="spacingAndGlyphs">Aberde...</text>
<text class="st" x="1404" y="370.500" textLength="43" lengthAdjust="spacingAndGlyphs">Abilene</text>
<text class="st" x="1476" y="370.500" textLength="32" lengthAdjust="spacingAndGlyphs">Akron</text>
<text class="st" x="1548.700" y="370.500" textLength="50" lengthAdjust="spacingAndGlyphs">Albuqu...</text>
<text class="st" x="1332" y="399" textLength="48" lengthAdjust="spacingAndGlyphs">Alexan...</text>
<text class="st" x="1404" y="399" textLength="29" lengthAdjust="spacingAndGlyphs">Allen</text>
<text class="st" x="1476" y="399" textLength="51" lengthAdjust="spacingAndGlyphs">Allento...</text>
<text class="st" x="1548.700" y="399" textLength="43" lengthAdjust="spacingAndGlyphs">Altoona</text>
<text class="st" x="1332" y="427" textLength="47" lengthAdjust="spacingAndGlyphs">Amarillo</text>
<text class="st" x="1404" y="427" textLength="49" lengthAdjust="spacingAndGlyphs">Anaheim</text>
<text class="st" x="1476" y="427" textLength="46" lengthAdjust="spacingAndGlyphs">Andover</text>
<text class="st" x="1548.700" y="427" textLength="38" lengthAdjust="spacingAndGlyphs">Ann Ar...</text>
</g>

<rect class="sl" x="1318.500" y="437.500" width="147.500" height="191.500"/>
<text class="sh" x="1326.500" y="454" textLength="37.500" lengthAdjust="spacingAndGlyphs">Person</text>
<use href="#ms" x="1421" y="449"/><use href="#fc" x="1448" y="449"/>
<rect x="1326" y="460.500" width="132" height="1" fill="#9dc3e6"/>
<rect class="sb" x="1326.500" y="465.500" width="131.500" height="21" rx="3"/><rect class="sb" x="1326.500" y="490.500" width="131.500" height="21" rx="3"/><rect class="sb" x="1326.500" y="515.500" width="131.500" height="21" rx="3"/><rect class="sb" x="1326.500" y="540" width="131.500" height="21" rx="3"/>
<text class="st" x="1334.500" y="480.500" textLength="81" lengthAdjust="spacingAndGlyphs">Anna Andreadi</text>
<text class="st" x="1334.500" y="505" textLength="106" lengthAdjust="spacingAndGlyphs">Cassandra Brandow</text>
<text class="st" x="1334.500" y="530" textLength="72" lengthAdjust="spacingAndGlyphs">Chuck Magee</text>
<text class="st" x="1334.500" y="555" textLength="78" lengthAdjust="spacingAndGlyphs">Kelly Williams</text>

<rect class="sl" x="1470" y="436.500" width="154.500" height="84.500"/>
<text class="sh" x="1478" y="453" textLength="51" lengthAdjust="spacingAndGlyphs">Returned</text>
<use href="#ms" x="1579" y="449"/><use href="#fc" x="1606" y="449"/>
<rect x="1478" y="460.500" width="139" height="1" fill="#9dc3e6"/>
<rect class="sb" x="1478.500" y="465.500" width="138" height="21" rx="3"/><rect class="sb" x="1478.500" y="490.500" width="138" height="21" rx="3"/>
<text class="st" x="1485.500" y="480.500" textLength="19" lengthAdjust="spacingAndGlyphs">Yes</text>
<text class="st" x="1485.500" y="505" textLength="38" lengthAdjust="spacingAndGlyphs">(blank)</text>

<rect class="sl" x="1470" y="529.500" width="154" height="100.500"/>
<text class="sh" x="1478" y="546" textLength="48" lengthAdjust="spacingAndGlyphs">Category</text>
<use href="#ms" x="1578.700" y="541"/><use href="#fc" x="1606" y="541"/>
<rect x="1478" y="552.500" width="138" height="1" fill="#9dc3e6"/>
<rect x="1601" y="557" width="15" height="65" fill="#f0f0f0"/><rect x="1606.500" y="573" width="3" height="23" fill="#808080"/>
<g clip-path="url(#c2)">
<rect class="sb" x="1478.500" y="557.500" width="117.500" height="21" rx="3"/><rect class="sb" x="1478.500" y="582.500" width="117.500" height="21" rx="3"/><rect class="sb" x="1478.500" y="607.500" width="117.500" height="21" rx="3"/>
<text class="st" x="1485.500" y="572.500" textLength="51" lengthAdjust="spacingAndGlyphs">Furniture</text>
<text class="st" x="1485.500" y="597.500" textLength="83" lengthAdjust="spacingAndGlyphs">Office Supplies</text>
<text class="st" x="1485.500" y="622" textLength="62" lengthAdjust="spacingAndGlyphs">Technology</text>
</g>

<!-- line chart -->
<text x="1502" y="656" text-anchor="middle" style="font-size:15px;font-weight:bold" textLength="175" lengthAdjust="spacingAndGlyphs">Sales &amp; Quantity by Years</text>
<path class="g" d="M1378 675.500h206M1378 706.500h206M1378 737.500h206M1378 768.500h206M1378 799.500h206M1378 830.500h206M1378 860.500h206M1378 860v42M1429.500 860v42M1481.500 860v42M1533 860v42M1584 860v42"/>
<text x="1367" y="678" text-anchor="end" textLength="35" lengthAdjust="spacingAndGlyphs">300,000</text>
<text x="1367" y="709" text-anchor="end" textLength="35" lengthAdjust="spacingAndGlyphs">250,000</text>
<text x="1367" y="740" text-anchor="end" textLength="35" lengthAdjust="spacingAndGlyphs">200,000</text>
<text x="1367" y="771" text-anchor="end" textLength="35" lengthAdjust="spacingAndGlyphs">150,000</text>
<text x="1367" y="802" text-anchor="end" textLength="35" lengthAdjust="spacingAndGlyphs">100,000</text>
<text x="1367" y="833" text-anchor="end" textLength="29" lengthAdjust="spacingAndGlyphs">50,000</text>
<text x="1367" y="864" text-anchor="end">0</text>
<text x="1595" y="678" textLength="21" lengthAdjust="spacingAndGlyphs">5000</text>
<text x="1595" y="696.500" textLength="21" lengthAdjust="spacingAndGlyphs">4500</text>
<text x="1595" y="715" textLength="21" lengthAdjust="spacingAndGlyphs">4000</text>
<text x="1595" y="733.500" textLength="21" lengthAdjust="spacingAndGlyphs">3500</text>
<text x="1595" y="752" textLength="21" lengthAdjust="spacingAndGlyphs">3000</text>
<text x="1595" y="771" textLength="21" lengthAdjust="spacingAndGlyphs">2500</text>
<text x="1595" y="789.500" textLength="21" lengthAdjust="spacingAndGlyphs">2000</text>
<text x="1595" y="808" textLength="21" lengthAdjust="spacingAndGlyphs">1500</text>
<text x="1595" y="826.500" textLength="21" lengthAdjust="spacingAndGlyphs">1000</text>
<text x="1595" y="845" textLength="16" lengthAdjust="spacingAndGlyphs">500</text>
<text x="1595" y="864">0</text>
<polyline points="1384,814.300 1397,806.700 1409.700,771 1422.700,749.300 1435.700,818.300 1448.700,805 1461.700,780 1474.700,750 1487.300,803.300 1500.300,776.700 1513.300,771.700 1526.300,715 1539,784.300 1552,778.300 1565,743.300 1578,689.300" fill="none" stroke="#5b9bd5" stroke-width="2.400"/>
<polyline points="1384,822.700 1397,805 1409.700,780 1422.700,753.300 1435.700,824.300 1448.700,803.300 1461.700,778.300 1474.700,744.300 1487.300,814.300 1500.300,776.700 1513.300,758.300 1526.300,727.300 1539,792.300 1552,770 1565,737.300 1578,686" fill="none" stroke="#ed7d31" stroke-width="2.400"/>
<text x="1384" y="878" text-anchor="middle" textLength="19" lengthAdjust="spacingAndGlyphs">Qtr1</text>
<text x="1409.700" y="878" text-anchor="middle" textLength="19" lengthAdjust="spacingAndGlyphs">Qtr3</text>
<text x="1435.700" y="878" text-anchor="middle" textLength="19" lengthAdjust="spacingAndGlyphs">Qtr1</text>
<text x="1461.700" y="878" text-anchor="middle" textLength="19" lengthAdjust="spacingAndGlyphs">Qtr3</text>
<text x="1487.300" y="878" text-anchor="middle" textLength="19" lengthAdjust="spacingAndGlyphs">Qtr1</text>
<text x="1513.300" y="878" text-anchor="middle" textLength="19" lengthAdjust="spacingAndGlyphs">Qtr3</text>
<text x="1539" y="878" text-anchor="middle" textLength="19" lengthAdjust="spacingAndGlyphs">Qtr1</text>
<text x="1565" y="878" text-anchor="middle" textLength="19" lengthAdjust="spacingAndGlyphs">Qtr3</text>
<text x="1403.500" y="899" text-anchor="middle" textLength="22" lengthAdjust="spacingAndGlyphs">2014</text>
<text x="1455" y="899" text-anchor="middle" textLength="22" lengthAdjust="spacingAndGlyphs">2015</text>
<text x="1507" y="899" text-anchor="middle" textLength="22" lengthAdjust="spacingAndGlyphs">2016</text>
<text x="1558" y="899" text-anchor="middle" textLength="22" lengthAdjust="spacingAndGlyphs">2017</text>
<path d="M1380 918h25" stroke="#5b9bd5" stroke-width="2.400"/><text x="1406" y="921" textLength="55" lengthAdjust="spacingAndGlyphs">Sum of Sales</text>
<path d="M1475 918h25" stroke="#ed7d31" stroke-width="2.400"/><text x="1501" y="921" textLength="71" lengthAdjust="spacingAndGlyphs">Sum of Quantity</text>
<rect class="pm" x="1586" y="936" width="13" height="14"/><rect class="pm" x="1600" y="936" width="13" height="14"/>
<path d="M1589 943h7M1592.500 939.500v7M1603 943h7" stroke="#777" stroke-width="1.200" fill="none"/>
</svg>
</body></html>
